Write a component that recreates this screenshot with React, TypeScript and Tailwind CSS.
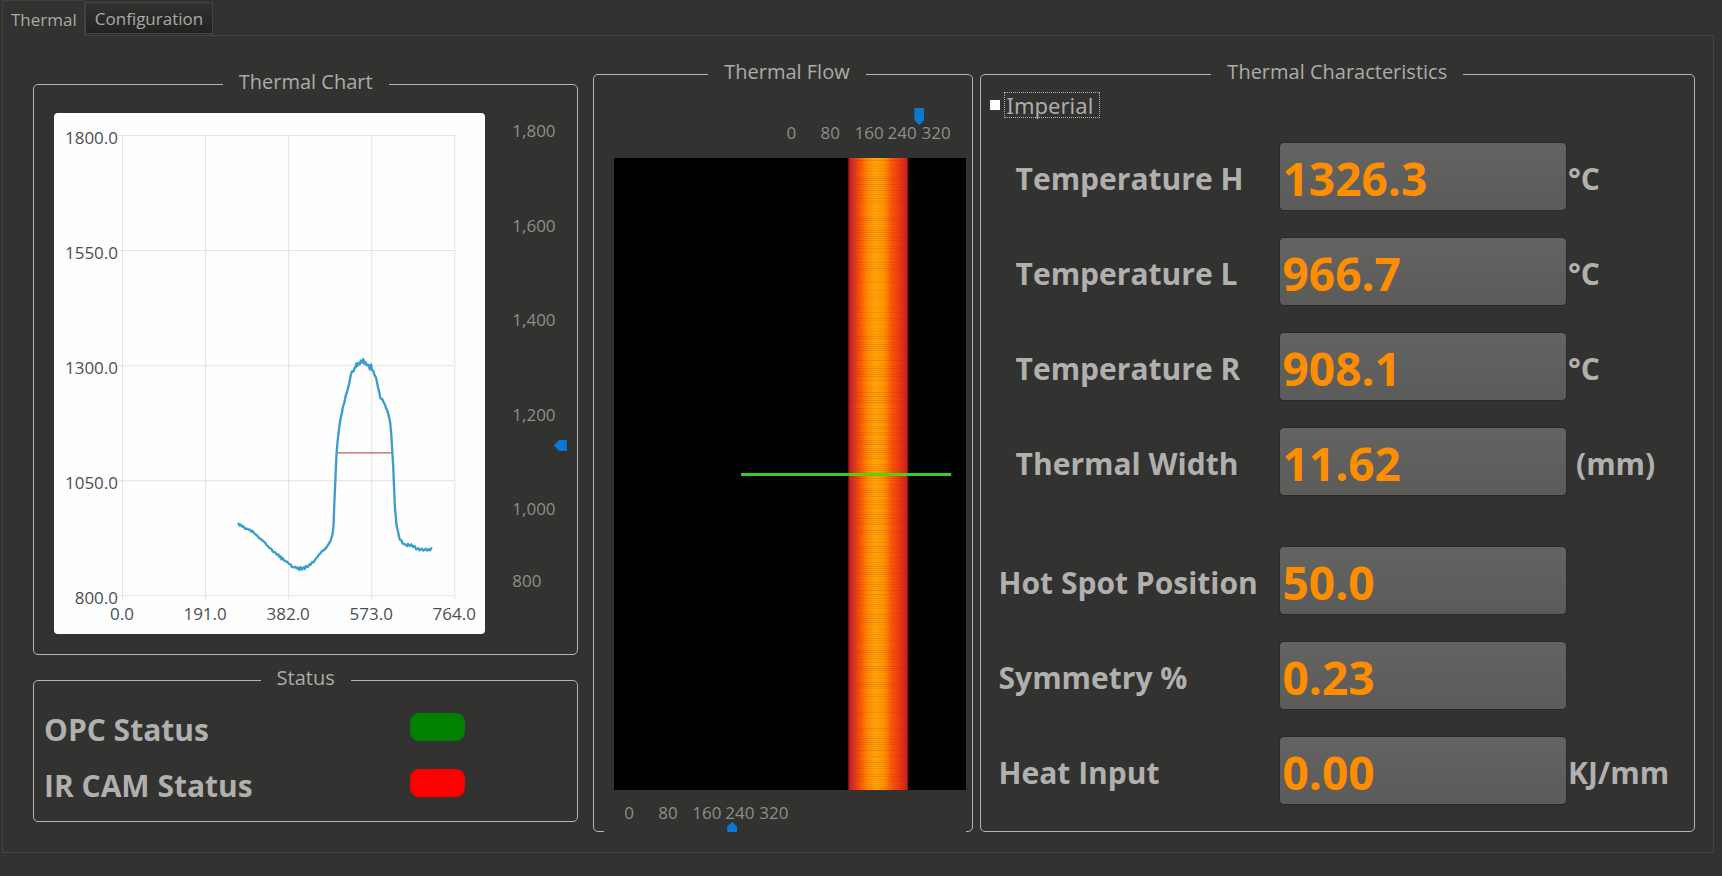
import { useState } from "react";
import type { ReactNode } from "react";

const UI_FONT = "font-['Open_Sans','Noto_Sans',sans-serif]";

function Group({ title, className, children }: { title: string; className?: string; children: ReactNode }) {
  return (
    <fieldset className={`min-w-0 rounded-[5px] border border-[#b4b4b2] ${className ?? ""}`}>
      <legend className="mx-auto px-4 pb-1 text-[20px] leading-[26px] text-[#acacaa]">{title}</legend>
      {children}
    </fieldset>
  );
}

const Y_TICKS = [
  { label: "1800.0", y: 22 },
  { label: "1550.0", y: 137 },
  { label: "1300.0", y: 252 },
  { label: "1050.0", y: 367 },
  { label: "800.0", y: 482 },
];
const X_TICKS = [
  { label: "0.0", x: 68 },
  { label: "191.0", x: 151 },
  { label: "382.0", x: 234 },
  { label: "573.0", x: 317 },
  { label: "764.0", x: 400 },
];

const PROFILE =
  "55,550 59,556 62,553 66,559 70,558 75,566 80,565 85,568 90,568 93,574 97,572 103,580 110,585 117,593 125,599 131,604 135,607 139,615 143,617 147,623 153,625 158,634 165,636 170,643 174,642 178,650 182,648 184,657 188,654 193,662 200,664 207,671 212,673 215,680 220,681 226,680 229,684 233,682 237,689 241,680 245,688 250,681 254,686 257,677 263,680 268,672 272,673 276,665 281,665 286,656 292,650 296,643 301,639 306,632 313,628 320,620 326,610 331,602 337,582 340,555 342,500 345,430 349,340 352,305 357,262 361,235 366,215 367,205 373,185 376,168 382,150 387,130 389,118 394,96 397,93 400,94 403,84 407,80 408,70 412,77 415,68 419,72 422,61 426,67 429,57 433,72 436,66 441,76 446,74 449,88 453,73 455,88 460,94 463,105 468,114 471,130 475,148 478,161 481,175 486,177 490,186 494,193 497,203 502,213 507,233 510,248 513,280 516,330 519,380 521,430 524,500 529,555 534,577 538,597 543,600 548,610 556,613 561,618 563,611 569,617 573,612 578,620 583,617 588,627 594,624 598,630 604,625 610,631 617,625 621,631 626,626 629,630 633,624";

function ProfileChart() {
  return (
    <svg viewBox="0 0 431 521" className="block h-auto w-full rounded-[4px] bg-[#fefefe]" role="img" aria-label="Thermal profile">
      <g stroke="#e2e2e2" strokeWidth="1">
        {Y_TICKS.map((t) => (
          <line key={t.label} x1="64" x2="400" y1={t.y + 0.5} y2={t.y + 0.5} />
        ))}
        {X_TICKS.map((t) => (
          <line key={t.label} x1={t.x + 0.5} x2={t.x + 0.5} y1="22" y2="486" />
        ))}
      </g>
      <g fill="#4c4e52" fontSize="17" fontFamily="'Open Sans','Noto Sans',sans-serif">
        {Y_TICKS.map((t) => (
          <text key={t.label} x="64" y={t.y + 9} textAnchor="end">
            {t.label}
          </text>
        ))}
        {X_TICKS.map((t) => (
          <text key={t.label} x={t.x} y="507" textAnchor="middle">
            {t.label}
          </text>
        ))}
      </g>
      <g transform="translate(166 227) scale(0.3333)" fill="none">
        <line x1="350" x2="516" y1="338" y2="338" stroke="#c8585a" strokeWidth="4" />
        <polyline points={PROFILE} stroke="#3b9dcb" strokeWidth="7" strokeLinejoin="round" strokeLinecap="round" />
      </g>
    </svg>
  );
}

function ThermalChart() {
  const [level, setLevel] = useState(1134);
  return (
    <div className="flex pt-[14px] pr-[10px] pb-[20px] pl-[20px]">
      <div className="min-w-0 flex-1">
        <ProfileChart />
      </div>
      <div className="ml-[27px] w-[41px] pt-[6px] text-[17px] leading-6 text-[#8f8e88]">
        <div className="flex h-[402px] flex-col justify-between">
          <span>1,800</span>
          <span>1,600</span>
          <span>1,400</span>
          <span>1,200</span>
          <span>1,000</span>
        </div>
        <div className="mt-12">800</div>
      </div>
      <input
        type="range"
        aria-label="Profile level"
        min={800}
        max={1800}
        value={level}
        onChange={(e) => setLevel(Number(e.target.value))}
        className="mt-[12px] h-[484px] w-[14px] appearance-none bg-transparent [direction:rtl] [writing-mode:vertical-lr] [&::-webkit-slider-thumb]:h-[11px] [&::-webkit-slider-thumb]:w-[13px] [&::-webkit-slider-thumb]:appearance-none [&::-webkit-slider-thumb]:bg-[#0a78d6] [&::-webkit-slider-thumb]:[clip-path:polygon(0_50%,40%_0,100%_0,100%_100%,40%_100%)]"
      />
    </div>
  );
}

function RulerLabels() {
  return (
    <div className="grid grid-cols-[34px_34px_33px_34px_30px] text-[17px] leading-4 text-[#8f8e88]">
      <span>0</span>
      <span>80</span>
      <span>160</span>
      <span>240</span>
      <span>320</span>
    </div>
  );
}

/* Scan lines get a repeatable pseudo-random strength. */
const SCAN_LINES = Array.from({ length: 316 }, (_, i) => {
  const n = Math.sin(i * 12.9898) * 43758.5453;
  return { y: i * 2, a: (n - Math.floor(n)) * 0.2 };
});

function FlowImage() {
  return (
    <svg viewBox="0 0 351 632" preserveAspectRatio="none" className="block h-[632px] w-full bg-black" role="img" aria-label="Thermal flow">
      <defs>
        <linearGradient id="heat" x1="0" x2="1" y1="0" y2="0">
          <stop offset="0" stopColor="#7c1218" />
          <stop offset="0.03" stopColor="#c9202a" />
          <stop offset="0.12" stopColor="#e33a1c" />
          <stop offset="0.24" stopColor="#ff6604" />
          <stop offset="0.32" stopColor="#ff8c00" />
          <stop offset="0.46" stopColor="#ffa60a" />
          <stop offset="0.6" stopColor="#ff9400" />
          <stop offset="0.72" stopColor="#fb5a06" />
          <stop offset="0.88" stopColor="#e83414" />
          <stop offset="0.97" stopColor="#cc2420" />
          <stop offset="1" stopColor="#5c1012" />
        </linearGradient>
      </defs>
      <rect x="234" y="0" width="60" height="632" fill="url(#heat)" />
      {SCAN_LINES.map((l) => (
        <rect key={l.y} x="234" y={l.y} width="60" height="1" fill="#a02800" fillOpacity={l.a} />
      ))}
      <rect x="127" y="315" width="210" height="3" fill="#2fd02a" />
      <rect x="236" y="315" width="56" height="3" fill="#5cd000" />
    </svg>
  );
}

function ThermalFlow() {
  const [top, setTop] = useState(282);
  const [bottom, setBottom] = useState(227);
  return (
    <div>
      <div className="flex justify-end pt-[19px] pr-[20px]">
        <div>
          <input
            type="range"
            aria-label="Upper marker"
            min={0}
            max={320}
            value={top}
            onChange={(e) => setTop(Number(e.target.value))}
            className="block h-[17px] w-[155px] appearance-none bg-transparent [&::-webkit-slider-thumb]:h-[17px] [&::-webkit-slider-thumb]:w-[10px] [&::-webkit-slider-thumb]:appearance-none [&::-webkit-slider-thumb]:bg-[#0a78d6] [&::-webkit-slider-thumb]:[clip-path:polygon(0_0,100%_0,100%_70%,50%_100%,0_70%)]"
          />
          <RulerLabels />
        </div>
      </div>
      <div className="mt-[17px] mr-[6px] ml-[12px]">
        <FlowImage />
      </div>
      <div className="mr-[6px] -mb-px ml-[2px] bg-[#323230] pt-[15px] pl-[20px]">
        <RulerLabels />
        <input
          type="range"
          aria-label="Lower marker"
          min={0}
          max={320}
          value={bottom}
          onChange={(e) => setBottom(Number(e.target.value))}
          className="mt-px block h-[10px] w-[155px] appearance-none bg-transparent [&::-webkit-slider-thumb]:h-[10px] [&::-webkit-slider-thumb]:w-[10px] [&::-webkit-slider-thumb]:appearance-none [&::-webkit-slider-thumb]:bg-[#0a78d6] [&::-webkit-slider-thumb]:[clip-path:polygon(50%_0,100%_45%,100%_100%,0_100%,0_45%)]"
        />
      </div>
    </div>
  );
}

function StatusRow({ label, color }: { label: string; color: string }) {
  return (
    <div className="flex h-10 items-center justify-between">
      <span className="pt-1">{label}</span>
      <span className={`h-7 w-[55px] rounded-[9px] ${color}`} />
    </div>
  );
}

const READINGS = [
  { id: "temp-h", label: "Temperature H", value: "1326.3", unit: "°C", row: "", indent: "pl-[17px]", unitPad: "" },
  { id: "temp-l", label: "Temperature L", value: "966.7", unit: "°C", row: "", indent: "pl-[17px]", unitPad: "" },
  { id: "temp-r", label: "Temperature R", value: "908.1", unit: "°C", row: "", indent: "pl-[17px]", unitPad: "" },
  { id: "width", label: "Thermal Width", value: "11.62", unit: "(mm)", row: "", indent: "pl-[17px]", unitPad: "pl-2" },
  { id: "hot-spot", label: "Hot Spot Position", value: "50.0", unit: "", row: "mt-6", indent: "", unitPad: "" },
  { id: "symmetry", label: "Symmetry %", value: "0.23", unit: "", row: "", indent: "", unitPad: "" },
  { id: "heat", label: "Heat Input", value: "0.00", unit: "KJ/mm", row: "", indent: "", unitPad: "" },
];

function Characteristics() {
  const [imperial, setImperial] = useState(false);
  return (
    <div className="pb-[26px] pl-[9px]">
      <div className="flex h-[30px] items-center gap-1 pt-px">
        <input
          id="imperial"
          type="checkbox"
          checked={imperial}
          onChange={(e) => setImperial(e.target.checked)}
          className="size-[10px] appearance-none bg-white checked:bg-[#0a78d6]"
        />
        <label
          htmlFor="imperial"
          className="h-[26px] border border-dotted border-[#b4b4b2] pr-[6px] pl-[2px] font-['Noto_Sans',sans-serif] text-[22px] leading-6 text-[#acacaa]"
        >
          Imperial
        </label>
      </div>
      <div className="mt-[23px] flex flex-col gap-[26px] pl-[9px] text-[30px] font-bold text-[#b0b0ae]">
        {READINGS.map((r) => (
          <div key={r.id} className={`flex h-[69px] items-center ${r.row}`}>
            <label htmlFor={r.id} className={`w-[280px] shrink-0 pt-1 whitespace-nowrap ${r.indent}`}>
              {r.label}
            </label>
            <input
              id={r.id}
              readOnly
              value={r.value}
              className="h-[69px] min-w-0 flex-1 rounded-[5px] border border-[#292928] bg-linear-to-b from-[#636462] to-[#5b5c5a] pt-[2px] pl-[3px] text-[46px] leading-[62px] font-bold text-[#ff8d00] outline-none"
            />
            <span className="w-[127px] shrink-0 pt-1 pl-px whitespace-nowrap">
              <span className={r.unitPad}>{r.unit}</span>
            </span>
          </div>
        ))}
      </div>
    </div>
  );
}

export default function App() {
  return (
    <div className={`min-h-screen bg-[#323230] pr-2 pb-6 pl-[2px] ${UI_FONT}`}>
      <div role="tablist" className="flex h-[35px] text-[17px] text-[#a9a9a7]">
        <button
          role="tab"
          aria-selected="true"
          className="z-10 -mb-px h-9 border border-b-0 border-[#3f3f3d] bg-[#323230] pt-[2px] pr-[7px] pl-2"
        >
          Thermal
        </button>
        <button
          role="tab"
          aria-selected="false"
          className="mt-[2px] h-8 border border-[#444442] bg-linear-to-b from-[#323230] to-[#222220] px-[9px] pt-[2px]"
        >
          Configuration
        </button>
      </div>
      <main className="grid grid-cols-[minmax(0,545fr)_minmax(0,394fr)_minmax(0,722fr)] items-start border border-[#434341] pr-[18px] pb-[20px] pl-[30px]">
        <div className="mt-[33px] flex min-w-0 flex-col gap-[10px]">
          <Group title="Thermal Chart">
            <ThermalChart />
          </Group>
          <Group title="Status">
            <div className="flex flex-col gap-4 pt-3 pr-[112px] pb-[18px] pl-[10px] text-[30px] font-bold text-[#b0b0ae]">
              <StatusRow label="OPC Status" color="bg-[#018001]" />
              <StatusRow label="IR CAM Status" color="bg-[#fe0000]" />
            </div>
          </Group>
        </div>
        <Group title="Thermal Flow" className="mt-[23px] ml-[15px] pl-2">
          <ThermalFlow />
        </Group>
        <Group title="Thermal Characteristics" className="mt-[23px] ml-[7px]">
          <Characteristics />
        </Group>
      </main>
    </div>
  );
}
